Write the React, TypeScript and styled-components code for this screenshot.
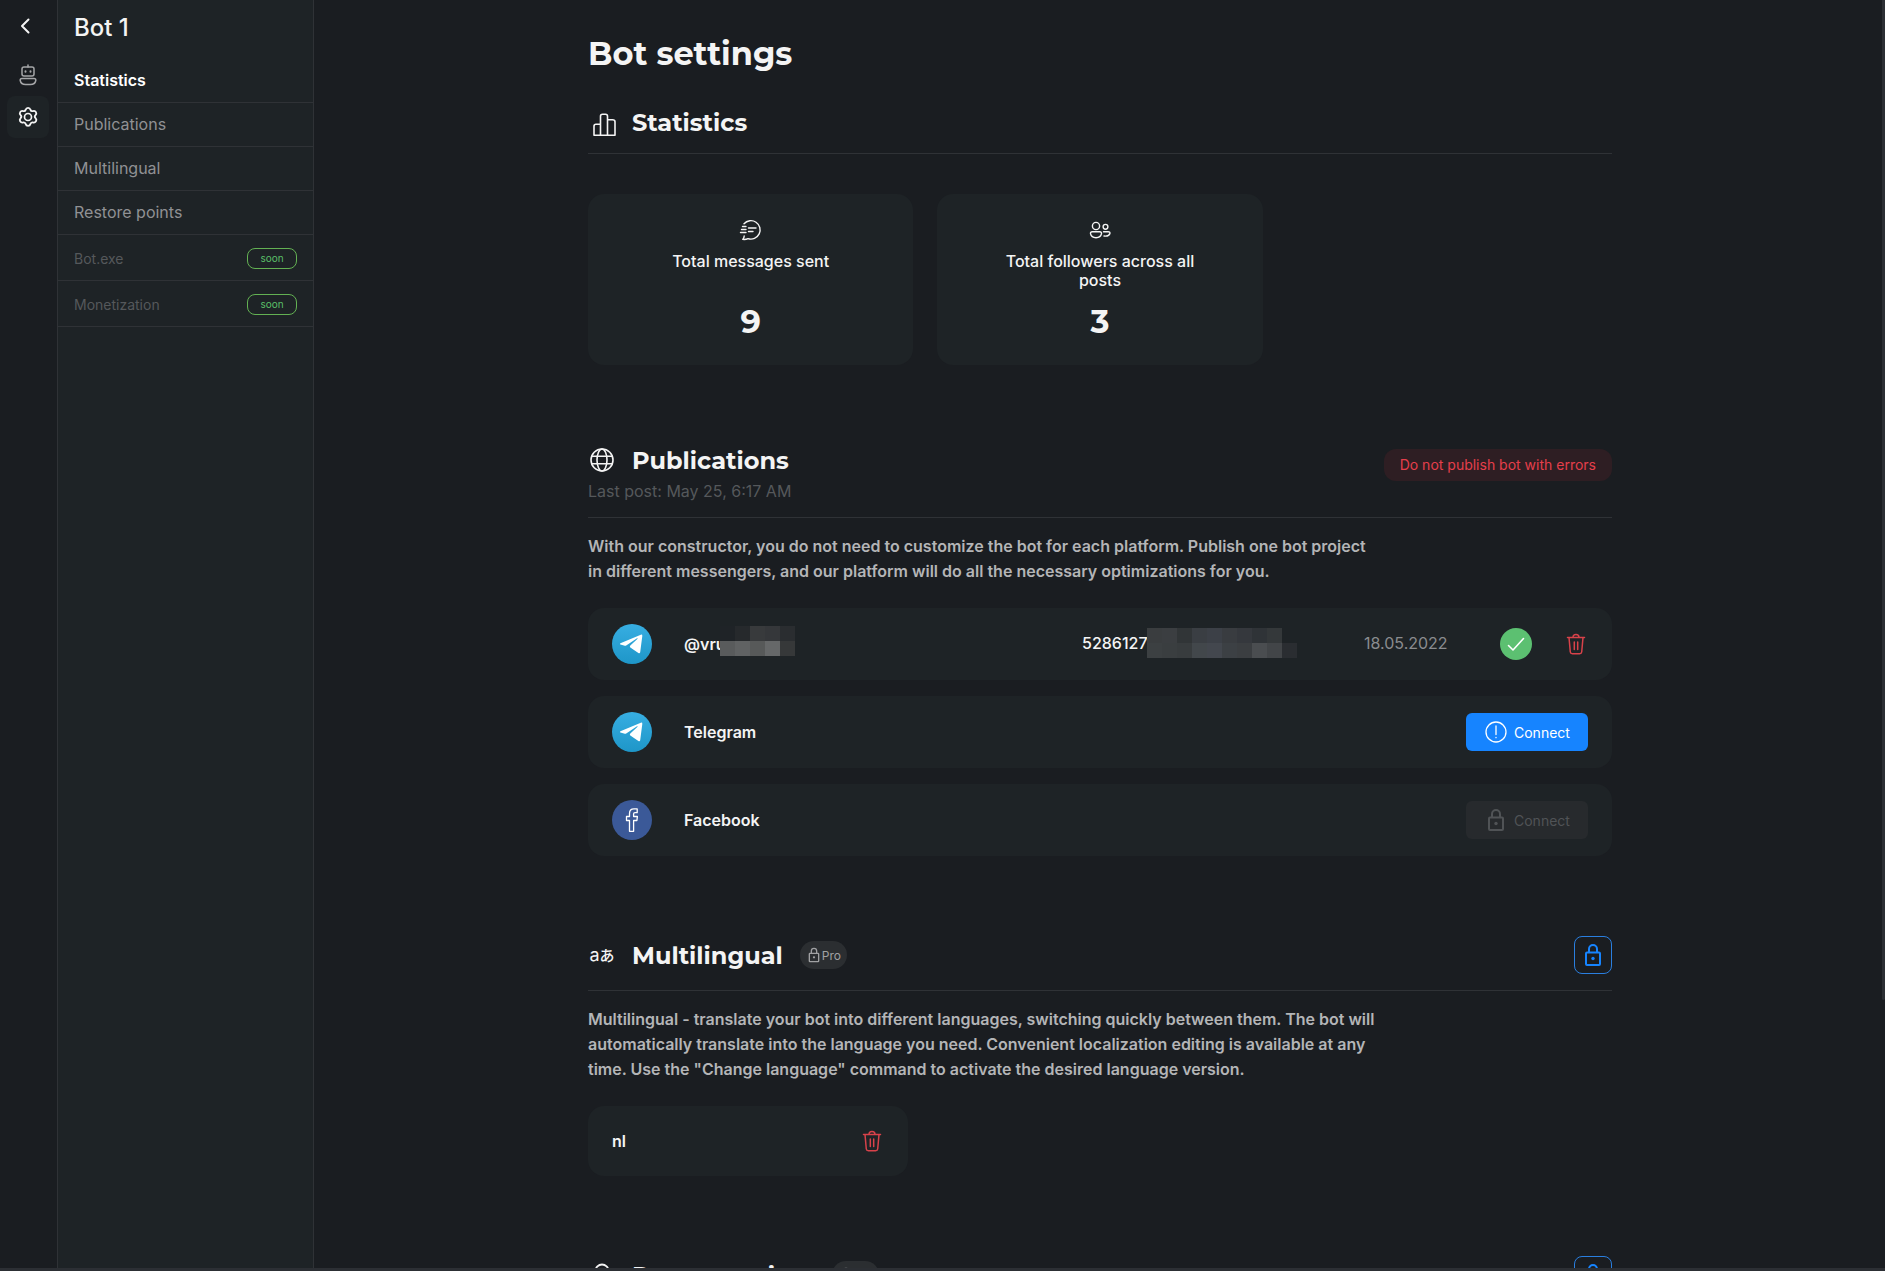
import React from "react";
import styled, { createGlobalStyle, css } from "styled-components";

const c = {
  bg: "#1a1d21",
  panel: "#1e2326",
  line: "#2f3236",
  white: "#f4f4f4",
  muted: "#909194",
  faint: "#55585b",
  red: "#d8424a",
  blue: "#1684ff",
  green: "#5cc071",
};

const Global = createGlobalStyle`
  *, *::before, *::after { box-sizing: border-box; }
  body { margin: 0; background: ${c.bg}; }
  body, button { font-family: Inter, "Noto Sans CJK JP", "Liberation Sans", sans-serif; }
  h1, h2, p, ul { margin: 0; padding: 0; }
  ul { list-style: none; }
  button { border: 0; padding: 0; background: none; cursor: pointer; color: inherit; }
  a { color: inherit; text-decoration: none; }
  svg { display: block; flex: none; }
`;

const Shell = styled.div`
  display: flex;
  height: 100vh;
  overflow: hidden;
  color: ${c.white};
  background: ${c.bg};
  border-bottom: 3px solid #2c2f34;
`;

const Rail = styled.nav`
  flex: none;
  width: 58px;
  padding: 5px 8px 0 7px;
  border-right: 1px solid ${c.line};
  display: flex;
  flex-direction: column;
`;

const RailButton = styled.button<{ $active?: boolean; $dim?: boolean }>`
  width: 42px;
  height: 42px;
  border-radius: 8px;
  display: flex;
  align-items: center;
  justify-content: center;
  color: ${(p) => (p.$dim ? "#a5a6a8" : c.white)};
  background: ${(p) => (p.$active ? c.panel : "transparent")};
  &:first-child { margin-bottom: 7px; }
`;

const Sidebar = styled.aside`
  flex: none;
  width: 256px;
  background: ${c.panel};
  border-right: 1px solid ${c.line};
`;

const BotName = styled.div`
  padding: 13px 16px 16px;
  font-size: 24px;
  line-height: 30px;
  font-weight: 500;
`;

const NavLink = styled.a<{ $active?: boolean; $soon?: boolean }>`
  display: flex;
  align-items: center;
  justify-content: space-between;
  height: ${(p) => (p.$soon ? 46 : 44)}px;
  padding: ${(p) => (p.$soon ? "2px 16px 0" : "0 16px 2px")};
  border-bottom: 1px solid ${c.line};
  font-size: ${(p) => (p.$soon ? 14 : 16)}px;
  font-weight: ${(p) => (p.$active ? 600 : 400)};
  color: ${(p) => (p.$active ? "#fff" : p.$soon ? c.faint : c.muted)};
`;

const Soon = styled.span`
  width: 50px;
  height: 21px;
  border: 1px solid #63b153;
  border-radius: 8px;
  color: #5abf68;
  font-size: 10px;
  line-height: 19px;
  text-align: center;
`;

const Main = styled.main`
  flex: 1;
  min-width: 0;
  position: relative;
  overflow: hidden;
  padding: 34px 24px 0 25px;
`;

const ScrollThumb = styled.div`
  position: absolute;
  top: 0;
  right: 0;
  width: 3px;
  height: 1000px;
  border-radius: 0 0 3px 3px;
  background: #2c2f34;
`;

const Content = styled.div`
  max-width: 1024px;
  margin: 0 auto;
`;

const PageTitle = styled.h1`
  font-family: Montserrat, Inter, sans-serif;
  font-size: 32px;
  line-height: 40px;
  font-weight: 700;
  margin-bottom: 33px;
`;

const Section = styled.section`
  margin-bottom: 80px;
`;

const SectionHead = styled.header<{ $top?: boolean }>`
  display: flex;
  justify-content: space-between;
  align-items: ${(p) => (p.$top ? "flex-start" : "center")};
  padding-bottom: 16px;
  border-bottom: 1px solid ${c.line};
`;

const TitleLine = styled.div`
  display: flex;
  align-items: center;
`;

const TitleIcon = styled.span`
  flex: none;
  width: 28px;
  height: 28px;
  margin-right: 16px;
  display: flex;
  align-items: center;
  justify-content: center;
`;

const SectionTitle = styled.h2`
  padding-top: 2px;
  font-family: Montserrat, Inter, sans-serif;
  font-size: 24px;
  line-height: 28px;
  font-weight: 700;
`;

const SubTitle = styled.p`
  margin-top: 6px;
  font-size: 16px;
  line-height: 20px;
  color: ${c.faint};
`;

const Intro = styled.p`
  max-width: 792px;
  margin: 16px 0 24px;
  font-size: 16px;
  line-height: 25px;
  font-weight: 600;
  color: #b4b5b7;
`;

const ErrorBadge = styled.button`
  height: 32px;
  margin-top: 4px;
  padding: 0 16px 2px;
  border-radius: 12px;
  background: #2e1e23;
  color: #e53e4b;
  font-size: 14px;
`;

const ProBadge = styled.span`
  display: flex;
  align-items: center;
  height: 28px;
  margin-left: 17px;
  padding: 0 6px;
  border-radius: 14px;
  background: #2b2e31;
  color: #a0a1a3;
  font-size: 12px;
`;

const LockButton = styled.button`
  width: 38px;
  height: 38px;
  border: 1px solid #2a7fe0;
  border-radius: 8px;
  color: ${c.blue};
  display: flex;
  align-items: center;
  justify-content: center;
`;

const Cards = styled.div`
  display: grid;
  grid-template-columns: repeat(3, 1fr);
  gap: 24px;
  margin-top: 40px;
`;

const Card = styled.div`
  display: flex;
  flex-direction: column;
  align-items: center;
  padding: 24px 56px;
  border-radius: 16px;
  background: ${c.panel};
  text-align: center;
`;

const CardLabel = styled.div`
  min-height: 38px;
  margin: 10px 0 12px;
  font-size: 16px;
  line-height: 19px;
  font-weight: 500;
`;

const CardValue = styled.div`
  font-family: Montserrat, Inter, sans-serif;
  font-size: 32px;
  line-height: 39px;
  font-weight: 700;
`;

const Rows = styled.ul`
  display: flex;
  flex-direction: column;
  gap: 16px;
`;

const Row = styled.li`
  display: flex;
  align-items: center;
  height: 72px;
  padding: 0 24px;
  border-radius: 16px;
  background: ${c.panel};
  font-size: 16px;
`;

const LangCard = styled(Row)`
  width: 320px;
  height: 70px;
  justify-content: space-between;
`;

const RowName = styled.div`
  flex: 1;
  display: flex;
  align-items: center;
  margin-left: 32px;
  font-weight: 600;
`;

const LangName = styled.span`
  font-weight: 600;
`;

const Cut = styled.span<{ $w: number }>`
  width: ${(p) => p.$w}px;
  overflow: hidden;
  white-space: nowrap;
`;

const RowId = styled.div`
  display: flex;
  align-items: center;
  width: 282px;
  padding-bottom: 2px;
  font-weight: 500;
`;

const RowDate = styled.time`
  width: 136px;
  padding-bottom: 2px;
  color: #8a8c8f;
`;

const Mosaic = styled.span<{ $cols: number; $lift: number }>`
  display: grid;
  grid-template-columns: repeat(${(p) => p.$cols}, 15px);
  grid-auto-rows: 15px;
  margin-bottom: ${(p) => p.$lift}px;
`;

const Cell = styled.i<{ $c: string }>`
  background: ${(p) => p.$c};
`;

const Check = styled.span`
  width: 32px;
  height: 32px;
  margin-right: 32px;
  border-radius: 50%;
  background: ${c.green};
  display: flex;
  align-items: center;
  justify-content: center;
`;

const IconButton = styled.button`
  width: 24px;
  height: 24px;
  color: ${c.red};
`;

const Connect = styled.button`
  display: flex;
  align-items: center;
  gap: 6px;
  width: 122px;
  height: 38px;
  padding-left: 18px;
  border-radius: 6px;
  font-size: 14px;
  background: ${c.blue};
  color: #fff;
  ${(p) =>
    p.disabled &&
    css`
      background: #272a2d;
      color: #505356;
      cursor: default;
    `}
`;

const stroke = {
  fill: "none",
  stroke: "currentColor",
  strokeLinecap: "round" as const,
  strokeLinejoin: "round" as const,
};

const ChevronIcon = () => (
  <svg width="28" height="28" viewBox="0 0 28 28" {...stroke} strokeWidth="2">
    <path d="M14.5 7.5 8 14l6.500 6.500" />
  </svg>
);

const BotIcon = () => (
  <svg width="20" height="24" viewBox="0 0 20 24" {...stroke} strokeWidth="1.500">
    <path d="M10 2v2" />
    <rect x="4" y="4" width="12" height="9" rx="2" />
    <path d="M7.500 8.200v.6M12.500 8.200v.6" strokeWidth="2" />
    <path d="M4 15.500h12c1.300 0 2 .8 1.800 2C17.300 20 15 21.500 12.500 21.500h-5C5 21.500 2.700 20 2.200 17.500c-.2-1.200.5-2 1.800-2Z" />
  </svg>
);

const GearIcon = () => (
  <svg width="24" height="24" viewBox="0 0 24 24" {...stroke} strokeWidth="1.700">
    <path d="M9.800 4.200c.3-1.100 1-1.700 2.200-1.700s1.900.6 2.200 1.700c.3 1 1.400 1.600 2.400 1.300 1.200-.4 2.100 0 2.700 1s.5 1.900-.4 2.800c-.8.8-.8 1.900 0 2.700l.2.200c.8.9.8 1.800.2 2.800-.6 1-1.500 1.400-2.700 1.100-1-.3-2.100.3-2.400 1.400-.3 1.100-1 1.700-2.200 1.700s-1.900-.6-2.200-1.700c-.3-1.100-1.400-1.700-2.400-1.400-1.200.3-2.100-.1-2.700-1.100-.6-1-.5-1.900.3-2.800l.1-.2c.8-.8.8-1.900 0-2.700-.9-.9-1-1.800-.4-2.800s1.500-1.400 2.700-1c1 .3 2.100-.3 2.400-1.300Z" transform="matrix(1.080 0 0 1.080 -.9 .1)" />
    <circle cx="12" cy="12" r="3.500" />
  </svg>
);

const BarsIcon = () => (
  <svg width="28" height="28" viewBox="0 0 28 28" {...stroke} strokeWidth="1.600">
    <path d="M6 28V19q0-2 2-2h4.500M12.500 28V9q0-2 2-2h3q2 0 2 2v19M19.500 12.500h5q2.500 0 2.500 2V28H6" transform="translate(0 -.8)" />
  </svg>
);

const GlobeIcon = () => (
  <svg width="28" height="28" viewBox="0 0 28 28" {...stroke} strokeWidth="1.600">
    <circle cx="14" cy="14" r="11" />
    <ellipse cx="14" cy="14" rx="5" ry="11" />
    <path d="M4 10.300h20M4 17.700h20" />
  </svg>
);

const RestoreIcon = () => (
  <svg width="28" height="28" viewBox="0 0 28 28" {...stroke} strokeWidth="1.800">
    <circle cx="14" cy="10" r="6.500" />
    <path d="M5 25c1-4 5-6 9-6s8 2 9 6" />
  </svg>
);

const MessageIcon = () => (
  <svg width="24" height="24" viewBox="0 0 24 24" {...stroke} strokeWidth="1.400">
    <path d="M5 5.800A9.200 9.200 0 1 1 9 20.600c-1.600.9-3.500 1-5.300.8 1-1 1.500-2 1.500-3.400" />
    <path d="M9.500 10h7.500M9.500 13.500H14M3.500 8.500H7M2.500 11.500H7M1.500 14.500H7" />
  </svg>
);

const PeopleIcon = () => (
  <svg width="24" height="24" viewBox="0 0 24 24" {...stroke} strokeWidth="1.400">
    <circle cx="8" cy="8" r="3.600" />
    <circle cx="17.500" cy="8.800" r="2.400" />
    <path d="M4.300 13.700h7.400c1.300 0 2 .9 1.800 2-.5 2.500-2.600 4-5.500 4s-5-1.500-5.500-4c-.2-1.100.5-2 1.800-2ZM15.500 13.700h4.800c1.300 0 1.900.8 1.600 1.800-.5 2-2.600 2.900-5.900 2.500" />
  </svg>
);

const LockIcon = ({ size = 24, w = 2 }: { size?: number; w?: number }) => (
  <svg width={size} height={size} viewBox="0 0 24 24" fill="none" stroke="currentColor" strokeWidth={w}>
    <rect x="5" y="9.500" width="14" height="12.500" rx="1" />
    <path d="M8 9.500V6a4 4 0 0 1 8 0v3.500" />
    <circle cx="12" cy="15.500" r="1.700" fill="currentColor" stroke="none" />
  </svg>
);

const AlertIcon = () => (
  <svg width="24" height="24" viewBox="0 0 24 24" {...stroke} strokeWidth="1.300">
    <circle cx="12" cy="12" r="10" />
    <path d="M12 6v8.500M12 17.300v.4" />
  </svg>
);

const TrashIcon = () => (
  <svg width="24" height="24" viewBox="0 0 24 24" {...stroke} strokeWidth="1.500">
    <path d="M3.500 5.500h17M9 5.500c0-1.800 1-3 3-3s3 1.200 3 3M5 5.500l1.300 14.500q.2 1.800 2 1.800h7.400q1.800 0 2-1.800L19 5.500M10.300 10v7.500M13.700 10v7.500" />
  </svg>
);

const TelegramLogo = () => (
  <svg width="40" height="40" viewBox="0 0 40 40">
    <defs>
      <linearGradient id="tg" x1="0" y1="0" x2="0" y2="1">
        <stop offset="0" stopColor="#37aee2" />
        <stop offset="1" stopColor="#1e96c8" />
      </linearGradient>
    </defs>
    <circle cx="20" cy="20" r="20" fill="url(#tg)" />
    <path
      fill="#fff"
      d="M8.400 19.200 28.800 10.700q1.700-.5 1.500 1.300L28.200 28.300q-.4 1.500-1.800.7L18.300 23.600q-1-1 0-2L25.600 14.700q.3-.8-.6-.4L14.600 21.200q-1.300.8-2.700.4L8.400 20.500q-1-.6 0-1.300Z"
    />
  </svg>
);

const FacebookLogo = () => (
  <svg width="40" height="40" viewBox="0 0 40 40">
    <circle cx="20" cy="20" r="20" fill="#3b5998" />
    <path
      fill="none"
      stroke="#fff"
      strokeWidth="1.300"
      strokeLinejoin="round"
      d="M17.500 31.300V20.500h-3v-4h3V13.500c0-3 1.800-4.600 4.500-4.600h3.200v3.800H23c-1 0-1.400.5-1.400 1.400v2.400h3.800l-.5 4h-3.300v10.800Z"
    />
  </svg>
);

const NAME_TILES = [
  "#1f2327", "#26292c", "#383a3c", "#35373a", "#2a2d30",
  "#595b5c", "#606263", "#575959", "#666869", "#363839",
];

const ID_TILES = [
  "#3a3d3f", "#3b3e41", "#313537", "#3a3e43", "#3c4047", "#393c40", "#35383d", "#2f3337", "#34383a", "#1e2326",
  "#3c4042", "#3a3e40", "#383c3e", "#42474b", "#43474e", "#3c4044", "#3b3e41", "#4a4d50", "#424548", "#2a2d31",
];

const Tiles = ({ cols, colors, lift = 0 }: { cols: number; colors: string[]; lift?: number }) => (
  <Mosaic $cols={cols} $lift={lift} aria-hidden="true">
    {colors.map((color, i) => (
      <Cell key={i} $c={color} />
    ))}
  </Mosaic>
);

const LangGlyph = styled.span`
  display: flex;
  align-items: center;
  font-size: 18px;
  line-height: 20px;
`;

const Kana = styled.span`
  font-family: "Noto Sans CJK JP", sans-serif;
  font-size: 15px;
  font-weight: 500;
`;

const Pro = () => (
  <ProBadge>
    <LockIcon size={16} />
    Pro
  </ProBadge>
);

const links = ["Statistics", "Publications", "Multilingual", "Restore points"];
const soonLinks = ["Bot.exe", "Monetization"];

export default function App() {
  return (
    <>
      <Global />
      <Shell>
        <Rail aria-label="Workspace">
          <RailButton aria-label="Back"><ChevronIcon /></RailButton>
          <RailButton $dim aria-label="Bot"><BotIcon /></RailButton>
          <RailButton $active aria-label="Settings"><GearIcon /></RailButton>
        </Rail>
        <Sidebar>
          <BotName>Bot 1</BotName>
          <nav aria-label="Bot settings">
            {links.map((label, i) => (
              <NavLink key={label} href={`#${i}`} $active={i === 0}>{label}</NavLink>
            ))}
            {soonLinks.map((label) => (
              <NavLink key={label} href="#soon" $soon>
                {label}
                <Soon>soon</Soon>
              </NavLink>
            ))}
          </nav>
        </Sidebar>
        <Main>
          <Content>
            <PageTitle>Bot settings</PageTitle>

            <Section>
              <SectionHead>
                <TitleLine>
                  <TitleIcon><BarsIcon /></TitleIcon>
                  <SectionTitle>Statistics</SectionTitle>
                </TitleLine>
              </SectionHead>
              <Cards>
                <Card>
                  <MessageIcon />
                  <CardLabel>Total messages sent</CardLabel>
                  <CardValue>9</CardValue>
                </Card>
                <Card>
                  <PeopleIcon />
                  <CardLabel>Total followers across all posts</CardLabel>
                  <CardValue>3</CardValue>
                </Card>
              </Cards>
            </Section>

            <Section>
              <SectionHead $top>
                <div>
                  <TitleLine>
                    <TitleIcon><GlobeIcon /></TitleIcon>
                    <SectionTitle>Publications</SectionTitle>
                  </TitleLine>
                  <SubTitle>Last post: May 25, 6:17 AM</SubTitle>
                </div>
                <ErrorBadge>Do not publish bot with errors</ErrorBadge>
              </SectionHead>
              <Intro>
                With our constructor, you do not need to customize the bot for each platform. Publish one bot project
                in different messengers, and our platform will do all the necessary optimizations for you.
              </Intro>
              <Rows>
                <Row>
                  <TelegramLogo />
                  <RowName>
                    <Cut $w={36}>@vru</Cut>
                    <Tiles cols={5} colors={NAME_TILES} lift={6} />
                  </RowName>
                  <RowId>
                    <Cut $w={65}>5286127</Cut>
                    <Tiles cols={10} colors={ID_TILES} />
                  </RowId>
                  <RowDate dateTime="2022-05-18">18.05.2022</RowDate>
                  <Check>
                    <svg width="20" height="20" viewBox="0 0 20 20" {...stroke} stroke="#fff" strokeWidth="1.600">
                      <path d="m2.500 11.500 4.500 4.500L17.500 4.500" />
                    </svg>
                  </Check>
                  <IconButton aria-label="Delete publication"><TrashIcon /></IconButton>
                </Row>
                <Row>
                  <TelegramLogo />
                  <RowName>Telegram</RowName>
                  <Connect><AlertIcon />Connect</Connect>
                </Row>
                <Row>
                  <FacebookLogo />
                  <RowName>Facebook</RowName>
                  <Connect disabled><LockIcon />Connect</Connect>
                </Row>
              </Rows>
            </Section>

            <Section>
              <SectionHead>
                <TitleLine>
                  <TitleIcon>
                    <LangGlyph aria-hidden="true">a<Kana>あ</Kana></LangGlyph>
                  </TitleIcon>
                  <SectionTitle>Multilingual</SectionTitle>
                  <Pro />
                </TitleLine>
                <LockButton aria-label="Unlock multilingual"><LockIcon /></LockButton>
              </SectionHead>
              <Intro>
                Multilingual - translate your bot into different languages, switching quickly between them. The bot will
                automatically translate into the language you need. Convenient localization editing is available at any
                time. Use the "Change language" command to activate the desired language version.
              </Intro>
              <Rows>
                <LangCard>
                  <LangName>nl</LangName>
                  <IconButton aria-label="Delete language"><TrashIcon /></IconButton>
                </LangCard>
              </Rows>
            </Section>

            <Section>
              <SectionHead>
                <TitleLine>
                  <TitleIcon><RestoreIcon /></TitleIcon>
                  <SectionTitle>Restore points</SectionTitle>
                  <Pro />
                </TitleLine>
                <LockButton aria-label="Unlock restore points"><LockIcon /></LockButton>
              </SectionHead>
            </Section>
          </Content>
          <ScrollThumb />
        </Main>
      </Shell>
    </>
  );
}
